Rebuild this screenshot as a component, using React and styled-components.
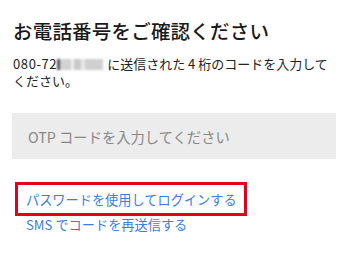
import React from 'react';
import styled, { createGlobalStyle } from 'styled-components';

const Global = createGlobalStyle`
    body{
        margin: 0;
        background: #fff;
        font-family: "Noto Sans CJK JP", "Noto Sans", sans-serif;
    }
`;

const Page = styled.div`
    width: 350px;
    height: 269px;
    padding: 0 14px 0 13px;
    box-sizing: border-box;
    overflow: hidden;
`;

const Title = styled.h1`
    margin: 0;
    padding-top: 19px;
    font-size: 19.5px;
    line-height: 24px;
    font-weight: 500;
    color: #1a1a1a;
    letter-spacing: 0.2px;
`;

const Lead = styled.p`
    margin: 12px 0 0;
    font-size: 13px;
    line-height: 17px;
    color: #222;
`;

const Digits = styled.span`
    letter-spacing: 0.6px;
`;

const Masked = styled.span`
    display: inline-block;
    width: 46px;
    height: 11px;
    vertical-align: -1px;
    margin-right: 4px;
    background: linear-gradient(90deg, #555 0 3px, #d2d2d2 3px 14px, #efefef 14px 17px, #c9c9c9 17px 24px, #e8e8e8 24px 28px, #cfcfcf 28px 46px);
    filter: blur(0.8px);
`;

const Field = styled.div`
    margin: 24px 0 0 -1px;
    height: 46px;
    background: #ececec;
    display: flex;
    align-items: center;
    padding-left: 16px;
    font-size: 14.3px;
    color: #888;
`;

const Links = styled.div`
    margin-top: 23px;
    display: flex;
    flex-direction: column;
    align-items: flex-start;
`;

const Highlight = styled.div`
    margin-left: 2px;
    border: 3px solid #e3001b;
    width: 232px;
    height: 34px;
    box-sizing: border-box;
    display: flex;
    align-items: center;
    padding-left: 8px;
`;

const Link = styled.a`
    font-size: 13.2px;
    line-height: 17px;
    color: #3b7de0;
    text-decoration: none;
    padding-left: ${p => p.$indent || 0}px;
`;

export default function App(){
    return(
        <Page>
            <Global />
            <Title>お電話番号をご確認ください</Title>
            <Lead>
                <Digits>080-72</Digits><Masked />に送信された 4 桁のコードを入力してください。
            </Lead>
            <Field>OTP コードを入力してください</Field>
            <Links>
                <Highlight>
                    <Link href="#">パスワードを使用してログインする</Link>
                </Highlight>
                <Link href="#" $indent={13}>SMS でコードを再送信する</Link>
            </Links>
        </Page>
    );
}
